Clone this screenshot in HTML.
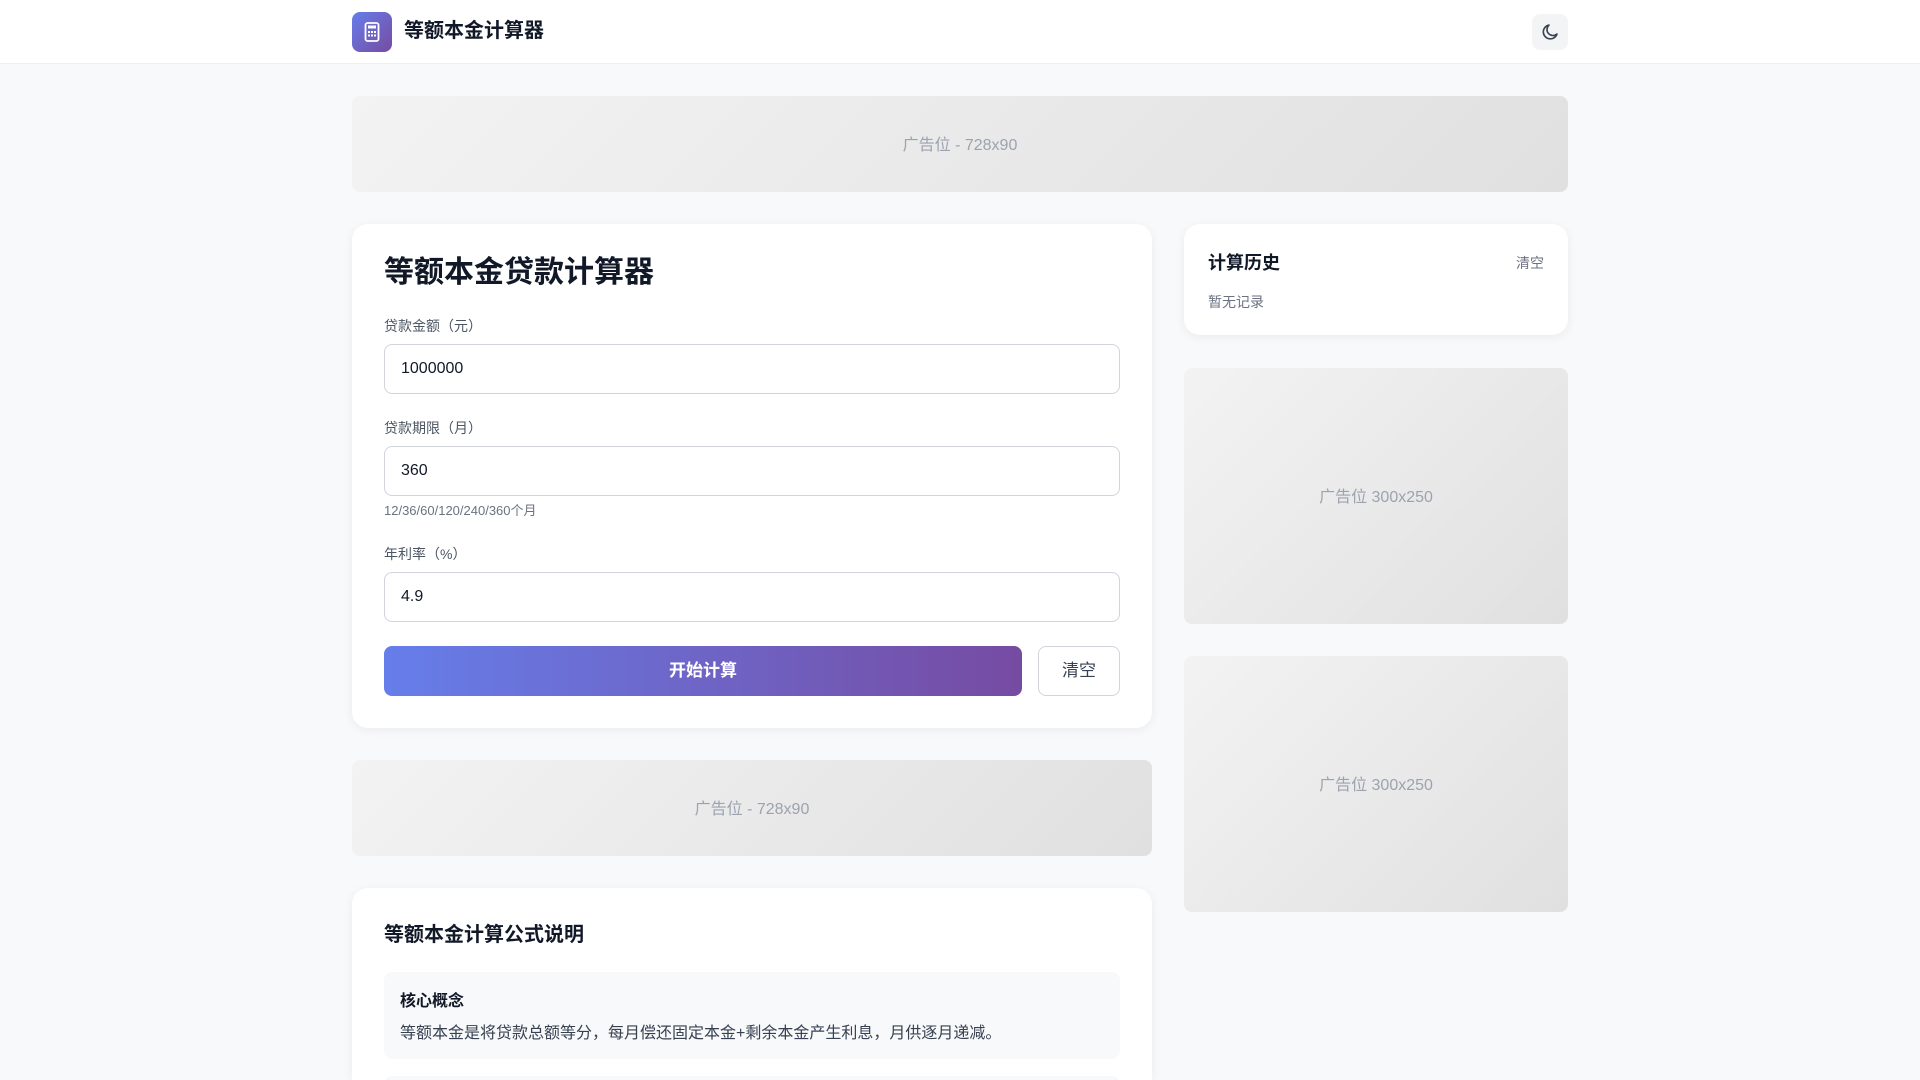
<!DOCTYPE html>
<html><head><meta charset="utf-8"><style>
*{box-sizing:border-box;margin:0;padding:0}
html,body{width:1920px;height:1080px;overflow:hidden}
body{position:relative;background:#f8f9fa;font-family:"Liberation Sans","Noto Sans CJK SC",sans-serif;color:#111827}
.hdr{position:absolute;left:0;top:0;width:1920px;height:64px;background:#fff;border-bottom:1px solid #eceef1}
.logo{position:absolute;left:352px;top:12px;width:40px;height:40px;border-radius:8px;background:linear-gradient(135deg,#667eea,#764ba2)}
.ttl{position:absolute;left:404px;top:16px;font-size:20px;font-weight:bold;line-height:30px}
.moon{position:absolute;left:1532px;top:14px;width:36px;height:36px;border-radius:8px;background:#f3f4f6}
.ad{position:absolute;border-radius:8px;background:linear-gradient(135deg,#f3f3f3,#e0e0e0);color:#9ca3af;font-size:16px;display:flex;align-items:center;justify-content:center;padding-bottom:3px}
.card{position:absolute;background:#fff;border-radius:16px;box-shadow:0 2px 10px rgba(0,0,0,.06)}
.lbl{position:absolute;left:32px;font-size:14px;color:#4b5563}
.inp{position:absolute;left:32px;width:736px;height:50px;border:1px solid #d1d5db;border-radius:8px;font-size:16px;padding-left:16px;line-height:48px;color:#111827}
</style></head><body>
<div class="hdr">
<div class="logo"><svg width="40" height="40" viewBox="0 0 40 40"><rect x="13.5" y="11" width="13" height="18" rx="2" fill="none" stroke="#fff" stroke-width="1.8"/><rect x="16" y="13.5" width="8" height="3" fill="#fff"/><g fill="#fff"><rect x="16" y="19" width="2" height="2"/><rect x="19" y="19" width="2" height="2"/><rect x="22" y="19" width="2" height="2"/><rect x="16" y="22.5" width="2" height="2"/><rect x="19" y="22.5" width="2" height="2"/><rect x="22" y="22.5" width="2" height="2"/></g></svg></div>
<div class="ttl">等额本金计算器</div>
<div class="moon"><svg width="36" height="36" viewBox="0 0 36 36"><path d="M17 11a7 7 0 1 0 8 9 5.5 5.5 0 0 1-8-9z" fill="none" stroke="#374151" stroke-width="1.6" stroke-linejoin="round"/></svg></div>
</div>
<div class="ad" style="left:352px;top:96px;width:1216px;height:96px">广告位 - 728x90</div>
<div class="card" style="left:352px;top:224px;width:800px;height:504px">
<div style="position:absolute;left:32px;top:29px;font-size:30px;font-weight:bold;line-height:40px">等额本金贷款计算器</div>
<div class="lbl" style="top:92px">贷款金额（元）</div>
<div class="inp" style="top:120px">1000000</div>
<div class="lbl" style="top:194px">贷款期限（月）</div>
<div class="inp" style="top:222px">360</div>
<div style="position:absolute;left:32px;top:276px;font-size:13px;color:#6b7280">12/36/60/120/240/360个月</div>
<div class="lbl" style="top:320px">年利率（%）</div>
<div class="inp" style="top:348px">4.9</div>
<div style="position:absolute;left:32px;top:422px;width:638px;height:50px;border-radius:8px;background:linear-gradient(90deg,#667eea,#764ba2);color:#fff;font-size:17px;font-weight:bold;text-align:center;line-height:50px">开始计算</div>
<div style="position:absolute;left:686px;top:422px;width:82px;height:50px;border-radius:8px;border:1px solid #d1d5db;font-size:17px;text-align:center;line-height:48px;color:#374151">清空</div>
</div>
<div class="ad" style="left:352px;top:760px;width:800px;height:96px">广告位 - 728x90</div>
<div class="card" style="left:352px;top:888px;width:800px;height:192px;border-radius:16px 16px 0 0;overflow:hidden">
<div style="position:absolute;left:32px;top:30px;font-size:20px;font-weight:bold">等额本金计算公式说明</div>
<div style="position:absolute;left:32px;top:84px;width:736px;height:87px;background:#f8f9fa;border-radius:8px">
<div style="position:absolute;left:16px;top:15px;font-size:16px;font-weight:bold">核心概念</div>
<div style="position:absolute;left:16px;top:47px;font-size:16px;color:#374151">等额本金是将贷款总额等分，每月偿还固定本金+剩余本金产生利息，月供逐月递减。</div>
</div>
<div style="position:absolute;left:32px;top:188px;width:736px;height:87px;background:#f8f9fa;border-radius:8px"></div>
</div>
<div class="card" style="left:1184px;top:224px;width:384px;height:111px">
<div style="position:absolute;left:24px;top:25px;font-size:18px;font-weight:bold">计算历史</div>
<div style="position:absolute;right:24px;top:29px;font-size:14px;color:#6b7280">清空</div>
<div style="position:absolute;left:24px;top:68px;font-size:14px;color:#6b7280">暂无记录</div>
</div>
<div class="ad" style="left:1184px;top:368px;width:384px;height:256px">广告位 300x250</div>
<div class="ad" style="left:1184px;top:656px;width:384px;height:256px">广告位 300x250</div>
</body></html>
